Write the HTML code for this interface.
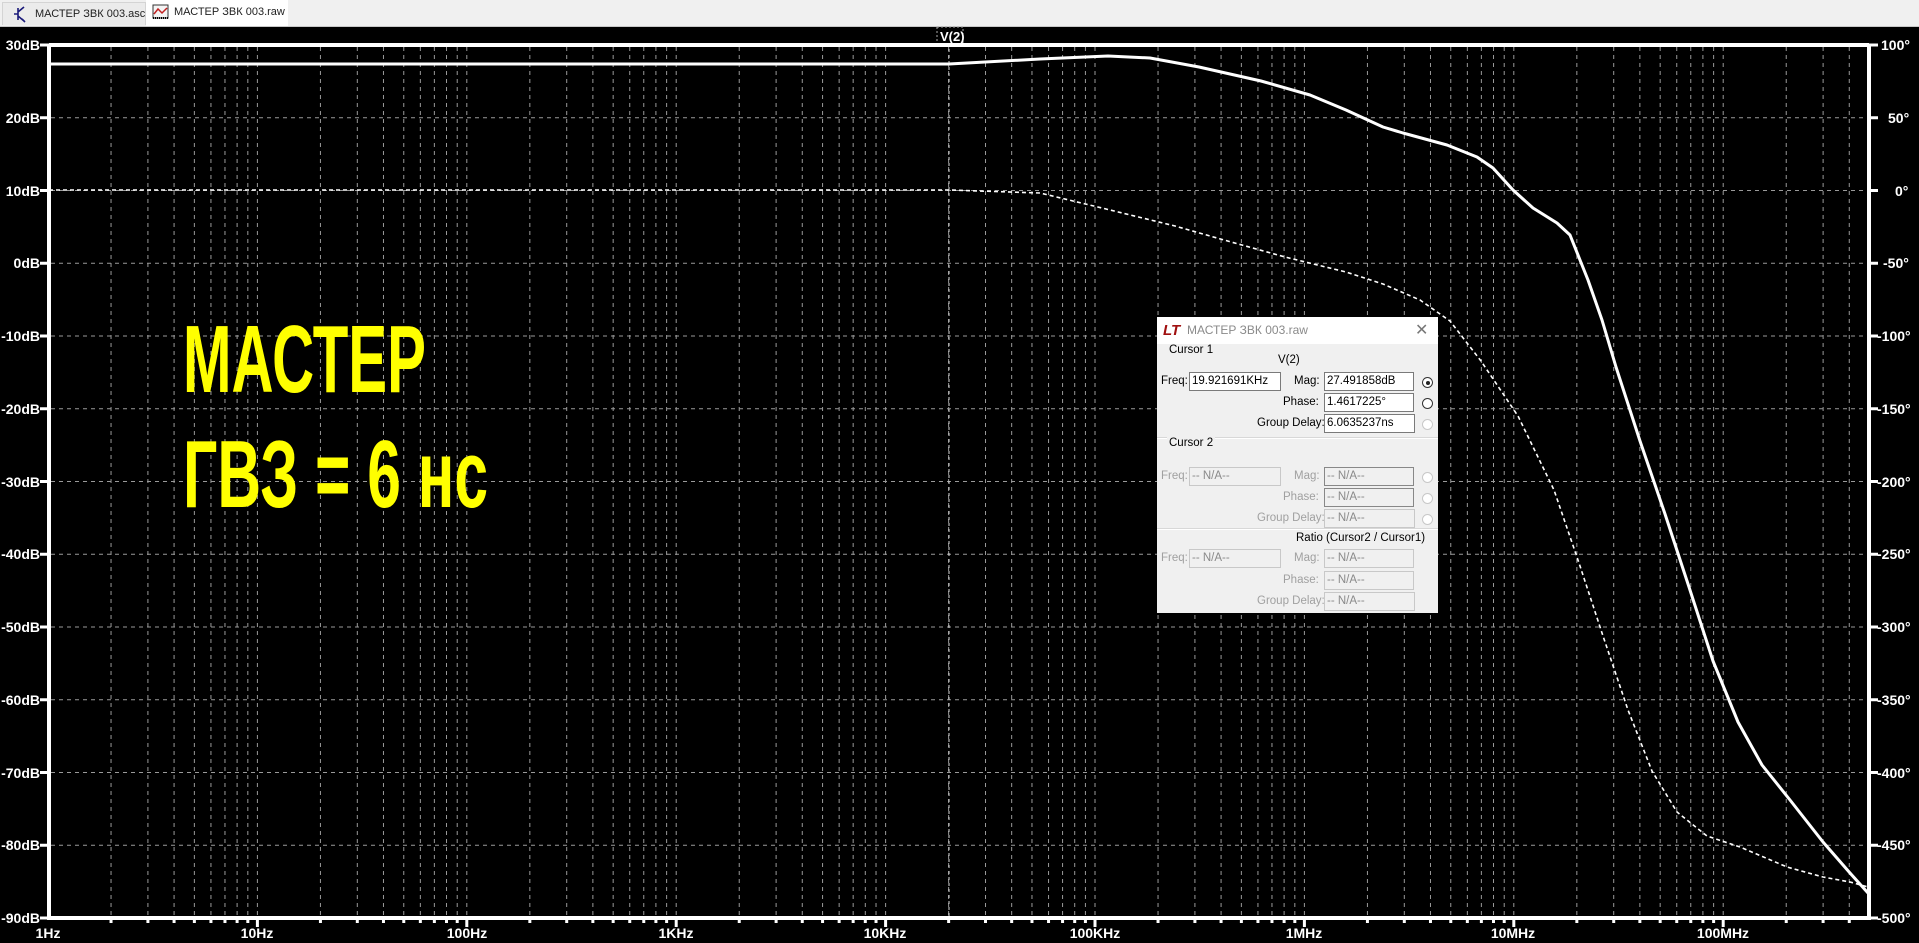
<!DOCTYPE html>
<html><head><meta charset="utf-8"><style>
body{margin:0;width:1919px;height:943px;background:#000;overflow:hidden;position:relative;font-family:"Liberation Sans",sans-serif}
#tabs{position:absolute;left:0;top:0;width:1919px;height:26px;background:#f0f0f0;border-bottom:1px solid #c8c8c8}
.tab{position:absolute;top:2px;height:22px;font-size:11px;line-height:22px;color:#222;white-space:nowrap}
.tab span{white-space:nowrap}
#dlg{position:absolute;left:1157px;top:317px;width:281px;height:296px;background:#f0f0f0;font-size:11.5px;color:#000}
#dlg .t{position:absolute;white-space:nowrap}
#dlg .b{position:absolute;background:#fff;border:1px solid #7a7a7a;box-sizing:border-box;height:19px;line-height:17px;padding-left:2px;white-space:nowrap}
#dlg .d{background:#f0f0f0;border-color:#c8c8c8;color:#8a8a8a}
#dlg .g{color:#a0a0a0}
.r{position:absolute;width:11px;height:11px;border-radius:50%;border:1px solid #333;background:#fff;box-sizing:border-box}
.rd{border-color:#c8c8c8}
.sep{position:absolute;left:0;width:281px;height:1px;background:#d8d8d8;border-bottom:1px solid #fff}
</style></head><body>
<div id="tabs">
 <div class="tab" style="left:2px;width:142px;background:#ebebeb;border:1px solid #d4d4d4;border-bottom:none">
  <svg width="18" height="18" style="position:absolute;left:10px;top:2px" viewBox="0 0 18 18"><path d="M5 3v12M5 9h-4M5 7l6-5M5 11l6 5M9 14l3 3" stroke="#1a1a7a" stroke-width="1.6" fill="none"/></svg>
  <span style="position:absolute;left:32px">МАСТЕР ЗВК 003.asc</span></div>
 <div class="tab" style="left:146px;width:142px;background:#fff;top:0;height:26px;line-height:24px">
  <svg width="18" height="16" style="position:absolute;left:6px;top:4px" viewBox="0 0 18 16"><rect x="1" y="1" width="15" height="13" fill="#f4f4f4" stroke="#333"/><path d="M2 10l4-5 4 4 5-5" stroke="#c02020" stroke-width="1.5" fill="none"/><path d="M1 14h15" stroke="#000" stroke-width="2" stroke-dasharray="1 1"/></svg>
  <span style="position:absolute;left:28px">МАСТЕР ЗВК 003.raw</span></div>
</div>
<svg width="1919" height="943" style="position:absolute;left:0;top:0" id="plot">
 <g id="grid" stroke="#9a9a9a" stroke-width="1" stroke-dasharray="4 4"></g>
 <line x1="949" y1="37" x2="949" y2="918" stroke="#ddd" stroke-dasharray="3 3"/>
 <rect x="937" y="27" width="26" height="17" fill="#000" stroke="#aaa" stroke-dasharray="2 2"/>
 <text x="940" y="41" fill="#fff" font-size="13" font-family="Liberation Sans" font-weight="bold">V(2)</text>
 <g stroke="#fff" stroke-width="4" fill="none"><path d="M49 45H1869M49 45V918H1869V45"/></g>
 <g id="ticks" stroke="#fff" stroke-width="3"></g>
 <polyline fill="none" stroke="#fff" stroke-width="1.6" stroke-dasharray="4 3" points="49,190 949,190 1040,193 1102,208 1175,226 1224,240 1285,257 1346,272 1383,284 1420,300 1450,321 1481,361 1518,416 1554,490 1579,563 1603,636 1628,710 1652,771 1677,812 1707,836 1740,847 1787,867 1823,877 1850,882 1868,887"/>
 <polyline fill="none" stroke="#fff" stroke-width="3" stroke-linejoin="round" points="49,64 949,64 1040,59 1108,56 1150,58 1199,67 1261,81 1310,95 1346,110 1383,127 1403,133 1447,145 1477,157 1493,168 1513,190 1533,208 1557,223 1570,235 1580,260 1588,280 1602,320 1616,367 1640,441 1665,514 1689,587 1713,661 1738,722 1762,765 1790,800 1823,842 1850,873 1868,893"/>
 <g fill="#fff" font-family="Liberation Sans" font-weight="bold" font-size="14" text-anchor="end">
  <text x="40" y="50">30dB</text><text x="40" y="123">20dB</text><text x="40" y="196">10dB</text><text x="40" y="268">0dB</text><text x="40" y="341">-10dB</text><text x="40" y="414">-20dB</text><text x="40" y="487">-30dB</text><text x="40" y="559">-40dB</text><text x="40" y="632">-50dB</text><text x="40" y="705">-60dB</text><text x="40" y="778">-70dB</text><text x="40" y="850">-80dB</text><text x="40" y="923">-90dB</text>
 </g>
 <g fill="#fff" font-family="Liberation Sans" font-weight="bold" font-size="14">
  <text x="1881" y="50">100°</text><text x="1888" y="123">50°</text><text x="1895" y="196">0°</text><text x="1883" y="268">-50°</text><text x="1877" y="341">-100°</text><text x="1877" y="414">-150°</text><text x="1877" y="487">-200°</text><text x="1877" y="559">-250°</text><text x="1877" y="632">-300°</text><text x="1877" y="705">-350°</text><text x="1877" y="778">-400°</text><text x="1877" y="850">-450°</text><text x="1877" y="923">-500°</text>
 </g>
 <g fill="#fff" font-family="Liberation Sans" font-weight="bold" font-size="14" text-anchor="middle">
  <text x="48" y="938">1Hz</text><text x="257" y="938">10Hz</text><text x="467" y="938">100Hz</text><text x="676" y="938">1KHz</text><text x="885" y="938">10KHz</text><text x="1095" y="938">100KHz</text><text x="1304" y="938">1MHz</text><text x="1513" y="938">10MHz</text><text x="1723" y="938">100MHz</text>
 </g>
 <g fill="#ffff00" font-family="'Liberation Sans Narrow','Liberation Sans',sans-serif" font-weight="bold" font-size="96">
  <text x="183" y="392" textLength="243" lengthAdjust="spacingAndGlyphs">МАСТЕР</text>
  <text x="183" y="507" textLength="305" lengthAdjust="spacingAndGlyphs">ГВЗ = 6 нс</text>
 </g>
</svg>
<div id="dlg">
 <div style="position:absolute;left:0;top:0;width:281px;height:27px;background:#fff"></div>
 <div class="t" style="left:6px;top:5px;font-size:15px;font-weight:bold;font-style:italic;color:#a01010">LT</div>
 <div class="t" style="left:30px;top:6px;font-size:12px;color:#8a8a8a">МАСТЕР ЗВК 003.raw</div>
 <div class="t" style="left:258px;top:3px;font-size:16px;color:#777">✕</div>
 <div class="t" style="left:10px;top:27px;background:#f0f0f0;padding:0 2px">Cursor 1</div>
 <div class="t" style="left:121px;top:37px">V(2)</div>
 <div class="t" style="left:4px;top:58px">Freq:</div>
 <div class="b" style="left:32px;top:55px;width:92px">19.921691KHz</div>
 <div class="t" style="left:137px;top:58px">Mag:</div>
 <div class="b" style="left:167px;top:55px;width:90px">27.491858dB</div>
 <div class="r" style="left:265px;top:60px"><div style="position:absolute;left:2.5px;top:2.5px;width:4px;height:4px;border-radius:50%;background:#222"></div></div>
 <div class="t" style="left:126px;top:79px">Phase:</div>
 <div class="b" style="left:167px;top:76px;width:90px">1.4617225°</div>
 <div class="r" style="left:265px;top:81px"></div>
 <div class="t" style="left:100px;top:100px">Group Delay:</div>
 <div class="b" style="left:167px;top:97px;width:91px">6.0635237ns</div>
 <div class="r rd" style="left:265px;top:102px"></div>
 <div class="sep" style="top:120px"></div>
 <div class="t" style="left:10px;top:120px;background:#f0f0f0;padding:0 2px">Cursor 2</div>
 <div class="t g" style="left:4px;top:153px">Freq:</div>
 <div class="b d" style="left:32px;top:150px;width:92px">-- N/A--</div>
 <div class="t g" style="left:137px;top:153px">Mag:</div>
 <div class="b d" style="left:167px;top:150px;width:90px;border-color:#888">-- N/A--</div>
 <div class="r rd" style="left:265px;top:155px"></div>
 <div class="t g" style="left:126px;top:174px">Phase:</div>
 <div class="b d" style="left:167px;top:171px;width:90px;border-color:#888">-- N/A--</div>
 <div class="r rd" style="left:265px;top:176px"></div>
 <div class="t g" style="left:100px;top:195px">Group Delay:</div>
 <div class="b d" style="left:167px;top:192px;width:91px">-- N/A--</div>
 <div class="r rd" style="left:265px;top:197px"></div>
 <div class="sep" style="top:211px"></div>
 <div class="t" style="left:139px;top:215px">Ratio (Cursor2 / Cursor1)</div>
 <div class="t g" style="left:4px;top:235px">Freq:</div>
 <div class="b d" style="left:32px;top:232px;width:92px">-- N/A--</div>
 <div class="t g" style="left:137px;top:235px">Mag:</div>
 <div class="b d" style="left:167px;top:232px;width:90px">-- N/A--</div>
 <div class="t g" style="left:126px;top:257px">Phase:</div>
 <div class="b d" style="left:167px;top:254px;width:90px">-- N/A--</div>
 <div class="t g" style="left:100px;top:278px">Group Delay:</div>
 <div class="b d" style="left:167px;top:275px;width:91px">-- N/A--</div>
</div>
<script>
var ns="http://www.w3.org/2000/svg",g=document.getElementById("grid"),t=document.getElementById("ticks");
function L(p,a){var e=document.createElementNS(ns,"line");for(var k in a)e.setAttribute(k,a[k]);p.appendChild(e);}
var D=209.4;
for(var d=0;d<9;d++)for(var k=1;k<10;k++){var x=48+D*(d+Math.log10(k));if(x>1866)break;if(x<50)continue;
 L(g,{x1:x,y1:47,x2:x,y2:916});L(t,{x1:x,y1:918,x2:x,y2:k==1?927:923});}
for(var i=1;i<12;i++){var y=45+i*72.75;L(g,{x1:51,y1:y,x2:1867,y2:y});L(t,{x1:40,y1:y,x2:49,y2:y});L(t,{x1:1869,y1:y,x2:1878,y2:y});}
L(t,{x1:40,y1:45,x2:49,y2:45});L(t,{x1:40,y1:918,x2:49,y2:918});L(t,{x1:1869,y1:45,x2:1878,y2:45});L(t,{x1:1869,y1:918,x2:1878,y2:918});
</script>
</body></html>
